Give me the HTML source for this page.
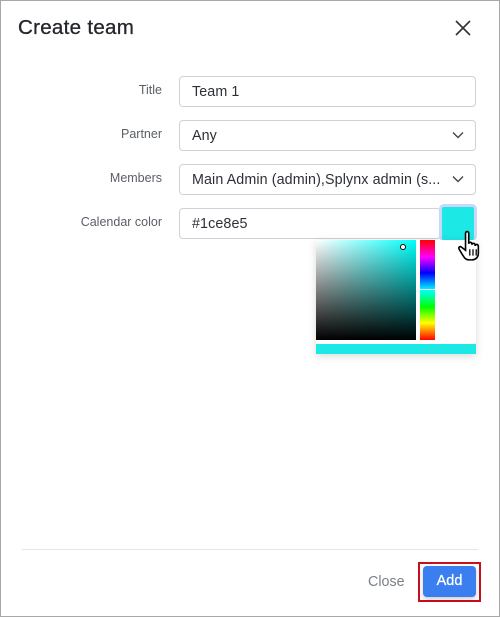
<!DOCTYPE html>
<html><head><meta charset="utf-8"><style>
*{box-sizing:border-box;margin:0;padding:0}
html,body{width:500px;height:617px;background:#fff;font-family:"Liberation Sans",sans-serif;overflow:hidden}
.frame{position:absolute;left:0;top:0;width:500px;height:617px;border:1px solid #a8a8a8}
h1{position:absolute;left:18px;top:16px;font-size:20.5px;font-weight:normal;color:#23262b;letter-spacing:0.3px;-webkit-text-stroke:0.3px #23262b}
.x{position:absolute;left:454px;top:19px}
.lbl{position:absolute;right:338px;font-size:12.5px;color:#5a5f66;text-align:right}
.inp{position:absolute;left:179px;width:297px;height:31px;border:1px solid #ced2d8;border-radius:4px;font-size:14.3px;color:#2c3036;padding:7px 0 0 12px;letter-spacing:0.1px}
.chev{position:absolute;right:11px;top:10px}
.sw{position:absolute;left:439px;top:204px;width:38px;height:37px;border-radius:5px;background:#c9d8f8}
.sw div{position:absolute;left:3px;top:3px;width:32px;height:33px;background:#1ce8e5;border-radius:2px}
.pick{position:absolute;left:316px;top:240px;width:160px;height:114px;background:#fff;box-shadow:0 2px 8px rgba(0,0,0,.15)}
.sv{position:absolute;left:0;top:0;width:100px;height:100px;background:linear-gradient(to top,#000,rgba(0,0,0,0)),linear-gradient(to right,#fff,#00fffb)}
.hue{position:absolute;left:104px;top:0;width:15px;height:100px;background:linear-gradient(to bottom,#f00 0%,#f0f 17%,#00f 33%,#0ff 50%,#0f0 67%,#ff0 83%,#f00 100%)}
.hl{position:absolute;left:104px;top:49px;width:15px;height:1px;background:#fff}
.bar{position:absolute;left:0;top:104px;width:160px;height:10px;background:#1ce8e5}
.dot{position:absolute;left:84px;top:4px;width:6px;height:6px;border:1.5px solid #000;border-radius:50%;background:#fff}
.line{position:absolute;left:22px;top:549px;width:456px;height:1px;background:#e3e5e8}
.close{position:absolute;left:368px;top:574px;font-size:14.3px;color:#7b8088}
.red{position:absolute;left:418px;top:562px;width:63px;height:40px;border:2px solid #c8101a}
.add{position:absolute;left:423px;top:566px;width:53px;height:31px;background:#3a7ef0;border-radius:4px;color:#fff;font-size:14.5px;text-align:center;line-height:31px;box-shadow:0 2px 4px rgba(0,0,0,.2);-webkit-text-stroke:0.3px #fff}
</style></head><body>
<div class="frame"></div>
<h1>Create team</h1>
<svg class="x" width="18" height="18" viewBox="0 0 18 18"><path d="M2 2L16 16M16 2L2 16" stroke="#333" stroke-width="1.6"/></svg>

<div class="lbl" style="top:83px">Title</div>
<div class="inp" style="top:76px">Team 1</div>

<div class="lbl" style="top:127px">Partner</div>
<div class="inp" style="top:120px">Any<svg class="chev" width="12" height="8" viewBox="0 0 12 8"><path d="M1 1.5L6 6.5L11 1.5" fill="none" stroke="#444" stroke-width="1.4"/></svg></div>

<div class="lbl" style="top:171px">Members</div>
<div class="inp" style="top:164px">Main Admin (admin),Splynx admin (s...<svg class="chev" width="12" height="8" viewBox="0 0 12 8"><path d="M1 1.5L6 6.5L11 1.5" fill="none" stroke="#444" stroke-width="1.4"/></svg></div>

<div class="lbl" style="top:215px">Calendar color</div>
<div class="inp" style="top:208px;width:262px">#1ce8e5</div>
<div class="sw"><div></div></div>

<div class="pick"><div class="sv"></div><div class="dot"></div><div class="hue"></div><div class="hl"></div><div class="bar"></div></div>

<svg style="position:absolute;left:458px;top:230px" width="30" height="32" viewBox="0 0 28 30"><path d="M7 3c0-2 3-2 3 0v10c0-2 3-2 3 0v1c0-2 3-2 3 0v1c0-2 3-2 3 0v7c0 4-3 6-6 6h-3c-3 0-4-2-6-5l-3-5c-1-2 1-3 2-2l4 3z" fill="#fff" stroke="#000" stroke-width="1.5"/><path d="M11 18v6M14 18v6M17 18v6" stroke="#000" stroke-width="1.2"/></svg>

<div class="line"></div>
<div class="close">Close</div>
<div class="red"></div>
<div class="add">Add</div>
</body></html>
